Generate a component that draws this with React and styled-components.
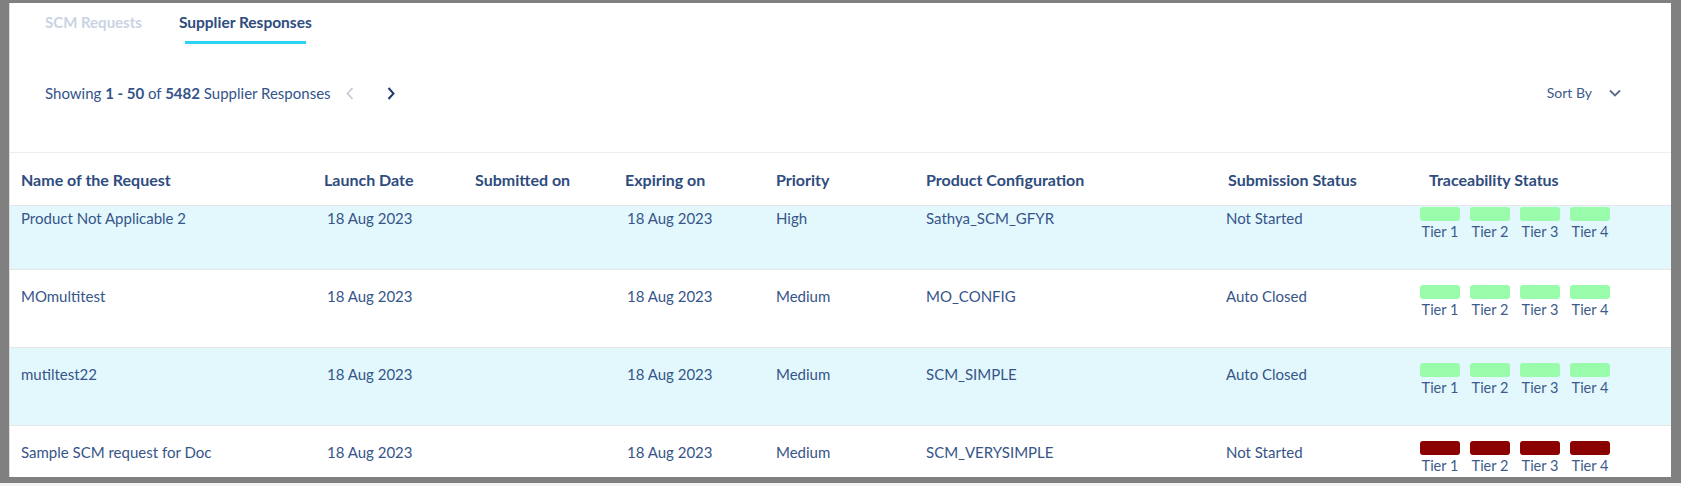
import React from "react";
import styled, { createGlobalStyle } from "styled-components";

const GlobalStyle = createGlobalStyle`
  html, body { margin: 0; padding: 0; }
  body {
    background: #808080;
    font-family: Lato, "Open Sans", sans-serif;
    -webkit-font-smoothing: antialiased;
  }
  * { box-sizing: border-box; }
`;

const Frame = styled.div`
  width: 1681px;
  height: 486px;
  display: flex;
  flex-direction: column;
  background: #808080;
  overflow: hidden;
`;

const Panel = styled.div`
  margin: 3px 10px 0 9px;
  height: 474px;
  background: #ffffff;
  border-left: 1px solid #dcdcdc;
  display: flex;
  flex-direction: column;
  overflow: hidden;
`;

const BottomStrip = styled.div`
  margin-top: 6px;
  height: 3px;
  background: #f4f4f4;
`;

const TabBar = styled.div`
  height: 45px;
  display: flex;
  align-items: flex-start;
  gap: 37px;
  padding-left: 35px;
`;

const Tab = styled.div`
  position: relative;
  height: 41px;
  padding-top: 9px;
  font-size: ${(p) => (p.$active ? 15.5 : 15)}px;
  line-height: 20px;
  font-weight: 700;
  color: ${(p) => (p.$active ? "#2e4c7e" : "#c9d3e4")};
  &::after {
    content: "";
    display: ${(p) => (p.$active ? "block" : "none")};
    position: absolute;
    left: 6px;
    right: 6px;
    bottom: 0;
    height: 3px;
    background: #2bd3f3;
  }
`;

const Toolbar = styled.div`
  height: 104px;
  display: flex;
  align-items: flex-start;
  justify-content: space-between;
  padding: 36px 50px 0 35px;
`;

const Showing = styled.div`
  display: flex;
  align-items: center;
  font-size: 15px;
  line-height: 18px;
  color: #34538a;
  b { font-weight: 700; }
`;

const Pager = styled.div`
  display: flex;
  align-items: center;
  gap: 33px;
  margin-left: 15px;
`;

const PageBtn = styled.span`
  display: inline-flex;
  width: 8px;
  height: 18px;
  align-items: center;
  justify-content: center;
  color: ${(p) => (p.$disabled ? "#c3c8d0" : "#1f3a66")};
`;

const SortBy = styled.div`
  display: flex;
  align-items: center;
  gap: 17px;
  font-size: 14px;
  line-height: 18px;
  color: #3d5a8a;
`;

const Table = styled.div`
  flex: 1;
  display: flex;
  flex-direction: column;
  border-top: 1px solid #eeeeee;
  min-height: 0;
`;

const cols = "304px 151px 150px 151px 150px 302px 201px 1fr";

const HeaderRow = styled.div`
  display: grid;
  grid-template-columns: ${cols};
  height: 53px;
  align-items: center;
  border-bottom: 1px solid #e6e6e6;
`;

const HeadCell = styled.div`
  padding-left: ${(p) => (p.$pad ?? 10)}px;
  font-size: 16px;
  font-weight: 700;
  color: #2e4c7e;
  white-space: nowrap;
`;

const Body = styled.div`
  flex: 1;
  overflow: hidden;
  min-height: 0;
`;

const Rows = styled.div`
  margin-top: -14px;
`;

const Row = styled.div`
  display: grid;
  grid-template-columns: ${cols};
  height: 78px;
  align-items: start;
  background: ${(p) => (p.$shaded ? "#e3f8fd" : "#ffffff")};
  border-bottom: 1px solid #e6e6e6;
`;

const Cell = styled.div`
  padding-top: 16px;
  padding-left: ${(p) => (p.$pad ?? 10)}px;
  font-size: 15px;
  line-height: 20px;
  color: #365589;
  white-space: nowrap;
`;

const Tiers = styled.div`
  display: flex;
  gap: 10px;
  padding-top: 15px;
  padding-left: 1px;
`;

const Tier = styled.div`
  display: flex;
  flex-direction: column;
  align-items: center;
  width: 40px;
`;

const TierBox = styled.div`
  width: 40px;
  height: 14px;
  border-radius: 3px;
  background: ${(p) => (p.$status === "bad" ? "#8b0000" : "#98fcab")};
`;

const TierLabel = styled.div`
  margin-top: 2px;
  font-size: 14.5px;
  line-height: 18px;
  color: #3d5a8a;
  white-space: nowrap;
`;

const ChevronLeft = () => (
  <svg width="8" height="13" viewBox="0 0 8 13" fill="none">
    <polyline points="6.5,1 1.5,6.5 6.5,12" stroke="currentColor" strokeWidth="1.6" />
  </svg>
);

const ChevronRight = () => (
  <svg width="8" height="13" viewBox="0 0 8 13" fill="none">
    <polyline points="1.5,1 6.5,6.5 1.5,12" stroke="currentColor" strokeWidth="2" />
  </svg>
);

const ChevronDown = () => (
  <svg width="12" height="8" viewBox="0 0 12 8" fill="none">
    <polyline points="1,1.5 6,6.5 11,1.5" stroke="#5b6c88" strokeWidth="1.8" />
  </svg>
);

const rows = [
  { name: "Product Not Applicable 2", launch: "18 Aug 2023", submitted: "", expiring: "18 Aug 2023", priority: "High", config: "Sathya_SCM_GFYR", status: "Not Started", tier: "good" },
  { name: "MOmultitest", launch: "18 Aug 2023", submitted: "", expiring: "18 Aug 2023", priority: "Medium", config: "MO_CONFIG", status: "Auto Closed", tier: "good" },
  { name: "mutiltest22", launch: "18 Aug 2023", submitted: "", expiring: "18 Aug 2023", priority: "Medium", config: "SCM_SIMPLE", status: "Auto Closed", tier: "good" },
  { name: "Sample SCM request for Doc", launch: "18 Aug 2023", submitted: "", expiring: "18 Aug 2023", priority: "Medium", config: "SCM_VERYSIMPLE", status: "Not Started", tier: "bad" },
];

export default function App() {
  return (
    <>
      <GlobalStyle />
      <Frame>
        <Panel>
          <TabBar>
            <Tab>SCM Requests</Tab>
            <Tab $active>Supplier Responses</Tab>
          </TabBar>
          <Toolbar>
            <Showing>
              <span>
                Showing <b>1 - 50</b> of <b>5482</b> Supplier Responses
              </span>
              <Pager>
                <PageBtn $disabled>
                  <ChevronLeft />
                </PageBtn>
                <PageBtn>
                  <ChevronRight />
                </PageBtn>
              </Pager>
            </Showing>
            <SortBy>
              <span>Sort By</span>
              <ChevronDown />
            </SortBy>
          </Toolbar>
          <Table>
            <HeaderRow>
              <HeadCell $pad={11}>Name of the Request</HeadCell>
              <HeadCell>Launch Date</HeadCell>
              <HeadCell>Submitted on</HeadCell>
              <HeadCell>Expiring on</HeadCell>
              <HeadCell>Priority</HeadCell>
              <HeadCell>Product Configuration</HeadCell>
              <HeadCell>Submission Status</HeadCell>
              <HeadCell>Traceability Status</HeadCell>
            </HeaderRow>
            <Body>
              <Rows>
                {rows.map((r, i) => (
                  <Row key={i} $shaded={i % 2 === 0}>
                    <Cell $pad={11}>{r.name}</Cell>
                    <Cell $pad={13}>{r.launch}</Cell>
                    <Cell>{r.submitted}</Cell>
                    <Cell $pad={12}>{r.expiring}</Cell>
                    <Cell>{r.priority}</Cell>
                    <Cell>{r.config}</Cell>
                    <Cell $pad={8}>{r.status}</Cell>
                    <Tiers>
                      {[1, 2, 3, 4].map((t) => (
                        <Tier key={t}>
                          <TierBox $status={r.tier} />
                          <TierLabel>Tier {t}</TierLabel>
                        </Tier>
                      ))}
                    </Tiers>
                  </Row>
                ))}
              </Rows>
            </Body>
          </Table>
        </Panel>
        <BottomStrip />
      </Frame>
    </>
  );
}
